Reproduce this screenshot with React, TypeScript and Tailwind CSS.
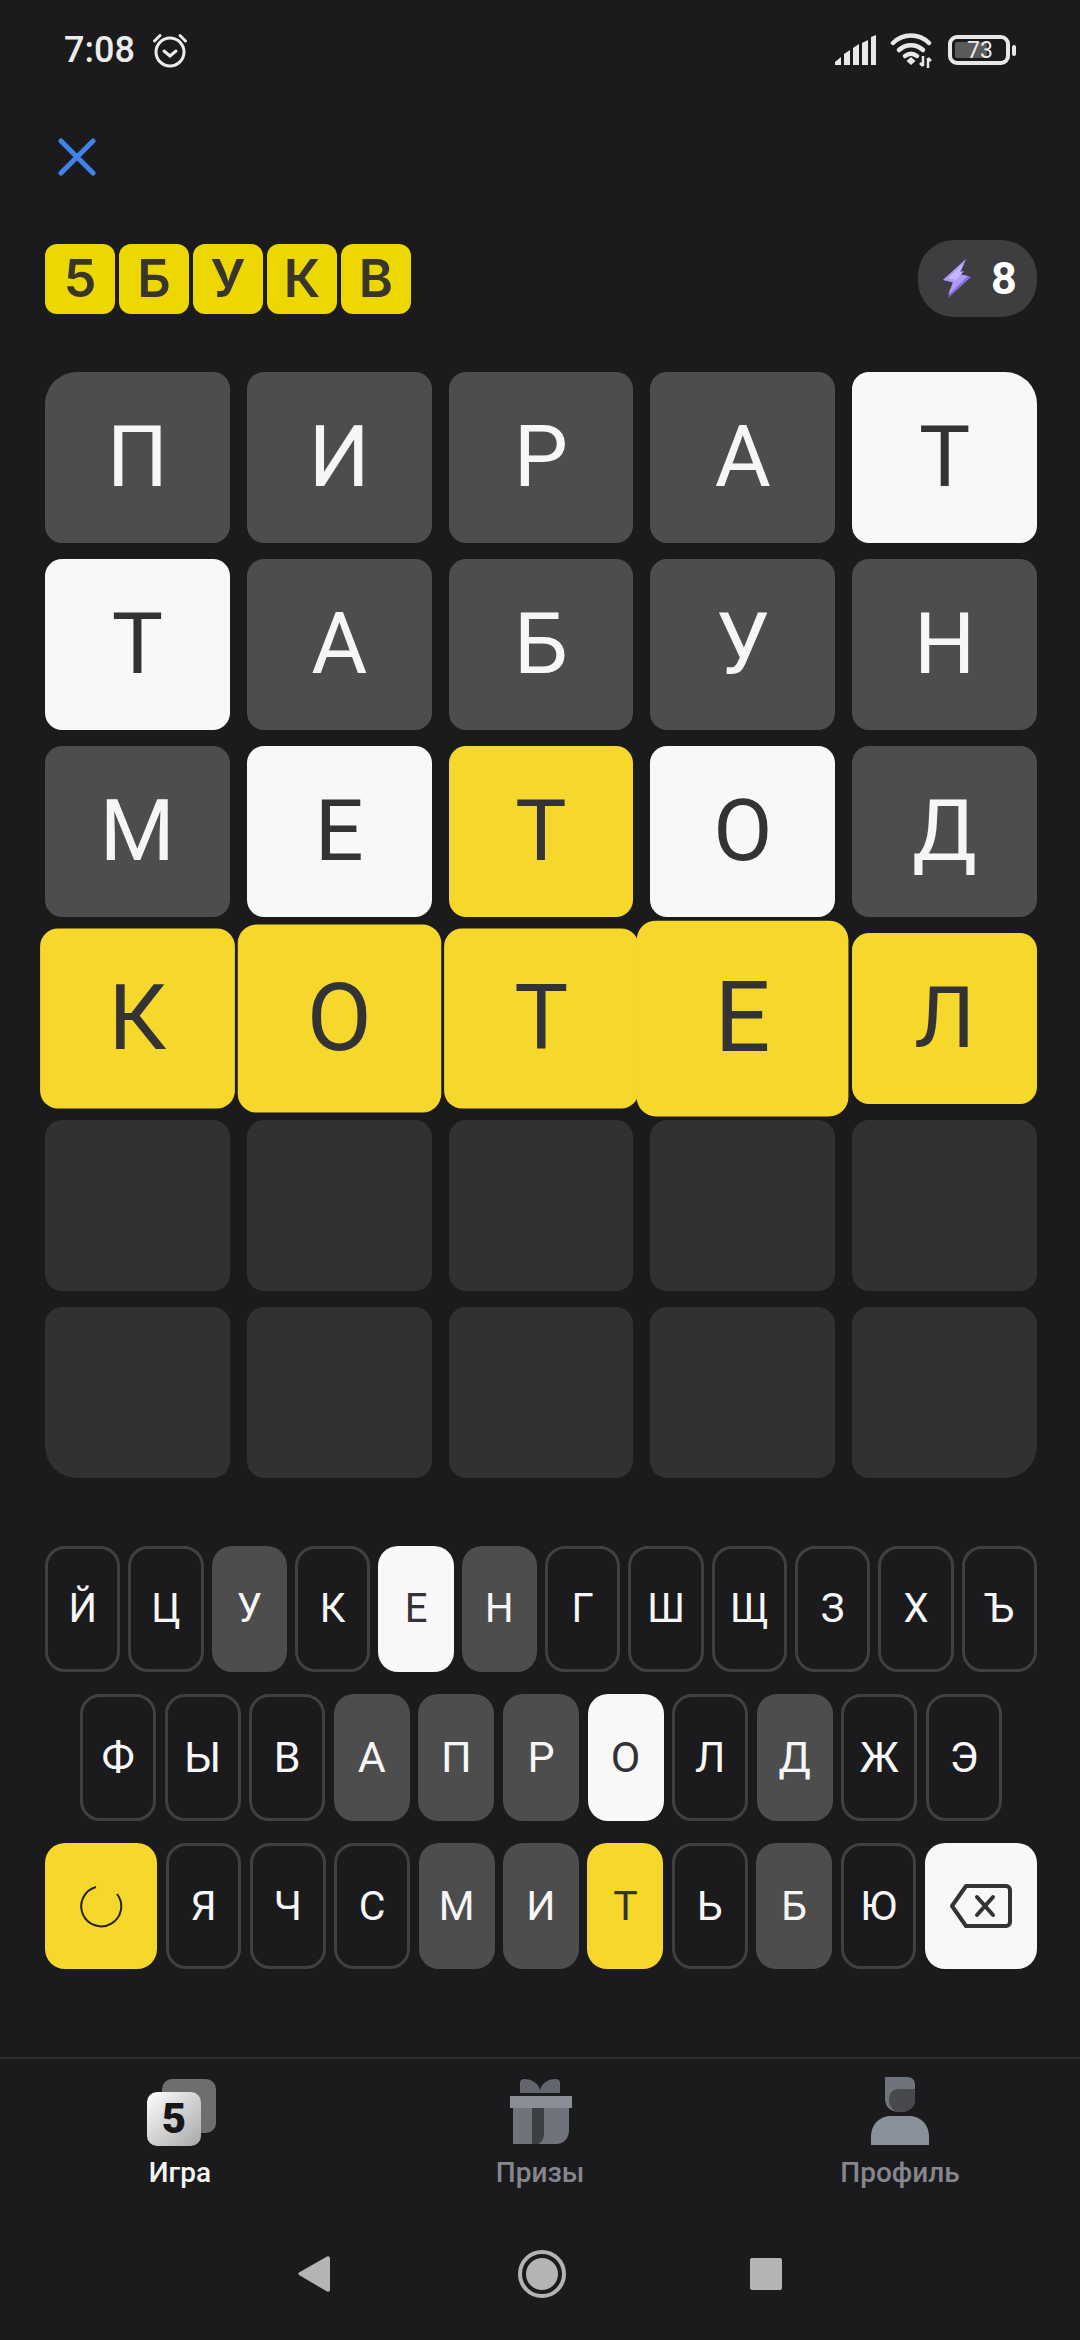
import React from 'react';

type Tone = 'gray' | 'white' | 'yellow' | 'empty' | 'plain';

const toneClass: Record<Tone, string> = {
  gray: 'bg-[#4d4d4d] text-[#f6f6f6]',
  white: 'bg-[#f8f8f8] text-[#333335]',
  yellow: 'bg-[#f6d72b] text-[#333335]',
  empty: 'bg-[#313133]',
  plain: 'border-[3px] border-[#404042] text-[#f6f6f6]',
};

type Cell = { l?: string; t: Tone; c?: string };

const board: Cell[] = [
  { l: 'П', t: 'gray', c: 'rounded-tl-[32px]' },
  { l: 'И', t: 'gray' },
  { l: 'Р', t: 'gray' },
  { l: 'А', t: 'gray' },
  { l: 'Т', t: 'white', c: 'rounded-tr-[32px]' },
  { l: 'Т', t: 'white' },
  { l: 'А', t: 'gray' },
  { l: 'Б', t: 'gray' },
  { l: 'У', t: 'gray' },
  { l: 'Н', t: 'gray' },
  { l: 'М', t: 'gray' },
  { l: 'Е', t: 'white' },
  { l: 'Т', t: 'yellow' },
  { l: 'О', t: 'white' },
  { l: 'Д', t: 'gray' },
  // current word, tiles are mid-animation
  { l: 'К', t: 'yellow', c: 'scale-[1.053]' },
  { l: 'О', t: 'yellow', c: 'scale-[1.1]' },
  { l: 'Т', t: 'yellow', c: 'scale-[1.053]' },
  { l: 'Е', t: 'yellow', c: 'scale-[1.145]' },
  { l: 'Л', t: 'yellow' },
  { t: 'empty' },
  { t: 'empty' },
  { t: 'empty' },
  { t: 'empty' },
  { t: 'empty' },
  { t: 'empty', c: 'rounded-bl-[32px]' },
  { t: 'empty' },
  { t: 'empty' },
  { t: 'empty' },
  { t: 'empty', c: 'rounded-br-[32px]' },
];

const row1: [string, Tone][] = [
  ['Й', 'plain'], ['Ц', 'plain'], ['У', 'gray'], ['К', 'plain'], ['Е', 'white'], ['Н', 'gray'],
  ['Г', 'plain'], ['Ш', 'plain'], ['Щ', 'plain'], ['З', 'plain'], ['Х', 'plain'], ['Ъ', 'plain'],
];
const row2: [string, Tone][] = [
  ['Ф', 'plain'], ['Ы', 'plain'], ['В', 'plain'], ['А', 'gray'], ['П', 'gray'], ['Р', 'gray'],
  ['О', 'white'], ['Л', 'plain'], ['Д', 'gray'], ['Ж', 'plain'], ['Э', 'plain'],
];
const row3: [string, Tone][] = [
  ['Я', 'plain'], ['Ч', 'plain'], ['С', 'plain'], ['М', 'gray'], ['И', 'gray'], ['Т', 'yellow'],
  ['Ь', 'plain'], ['Б', 'gray'], ['Ю', 'plain'],
];

function Key({ k }: { k: [string, Tone] }) {
  return (
    <div className={`rounded-[20px] flex items-center justify-center leading-none ${toneClass[k[1]]}`}>
      {k[0]}
    </div>
  );
}

function StatusBar() {
  return (
    <div className="h-[98px] flex items-center justify-between pl-[64px] pr-[64px] pt-[2px]">
      <div className="flex items-center gap-[17px]">
        <span className="text-[36px] font-medium leading-none text-[#ececec]">7:08</span>
        <svg width="36" height="36" viewBox="0 0 36 36" fill="none" stroke="#ececec" strokeWidth="3" strokeLinecap="round">
          <circle cx="18" cy="20" r="14" />
          <path d="M12 19l6 5 6-5" />
          <path d="M2.5 9L8 3.5M33.5 9L28 3.5" />
        </svg>
      </div>
      <div className="flex items-center">
        <svg width="42" height="30" viewBox="0 0 42 30" fill="#e8e8e8" className="mr-[14px]">
          <path d="M1 30v-3l6-5v8zM10 30V19l6-4v15zM19 30V13l6-4v21zM28 30V8l6-3v25z" />
          <path d="M37 30V2l5-2v30z" />
        </svg>
        <svg width="44" height="36" viewBox="0 0 44 36" fill="none" className="mr-[14px]">
          <g stroke="#e8e8e8" strokeWidth="4.5" strokeLinecap="round">
            <path d="M3 11c10-10 26-10 36 0" />
            <path d="M9 18c7-6.500 17-6.500 24 0" />
            <path d="M15 24c4-3 8-3 12 0" />
          </g>
          <path d="M16.500 29L21 25l4.500 4-4.500 4z" fill="#e8e8e8" />
          <path d="M33 24v10M33 34l-3-3M38 36V26M38 26l3 3" stroke="#e8e8e8" strokeWidth="2.500" />
        </svg>
        <div className="relative w-[62px] h-[30px] rounded-[9px] border-[4px] border-[#e8e8e8] flex items-center">
          <div className="ml-[3px] w-[32px] h-[16px] bg-[#5a5a5a] rounded-[2px]" />
          <span className="absolute left-[15px] text-[23px] leading-none text-[#ececec]">73</span>
        </div>
        <div className="ml-[2px] w-[4px] h-[11px] rounded-full bg-[#e8e8e8]" />
      </div>
    </div>
  );
}

function Header() {
  return (
    <div className="flex items-center justify-between pl-[45px] pr-[43px] h-[77px]">
      <div className="flex gap-[4px] font-['Inter',sans-serif]">
        {['5', 'Б', 'У', 'К', 'В'].map((c) => (
          <div key={c} className="w-[70px] h-[70px] rounded-[12px] bg-[#ecd800] text-[#38352a] flex items-center justify-center text-[52px] font-semibold leading-none">
            {c}
          </div>
        ))}
      </div>
      <div className="w-[119px] h-[77px] rounded-[36px] bg-[#3e3e40] flex items-center pl-[24px]">
        <svg width="31" height="40" viewBox="0 0 31 40">
          <path d="M24 0L1 21l11 3-6 15 23-21-11-3z" fill="#8a6ee0" />
          <path d="M24 0L1 21l10 2-5 13 20-19-10-2z" fill="#b09af8" />
          <path d="M22 4L6 19l8 2 8-9-4 1z" fill="#c6b4fc" />
        </svg>
        <span className="ml-[18px] text-[45px] font-bold leading-none text-white">8</span>
      </div>
    </div>
  );
}

function Board() {
  return (
    <div className="grid grid-cols-5 gap-x-[17px] gap-y-[16.5px] auto-rows-[170.5px] pl-[45px] pr-[43px] mt-[55px]">
      {board.map((cell, i) => (
        <div
          key={i}
          className={`rounded-[17px] flex items-center justify-center text-[86px] leading-none ${toneClass[cell.t]} ${cell.c ?? ''}`}
        >
          {cell.l}
        </div>
      ))}
    </div>
  );
}

function Keyboard() {
  return (
    <div className="flex flex-col gap-[22px] mt-[68.5px] pl-[45px] pr-[43px]">
      <div className="grid grid-cols-12 gap-[8px] h-[126px] text-[40px]">
        {row1.map((k) => <Key key={k[0]} k={k} />)}
      </div>
      <div className="grid grid-cols-11 gap-[8.5px] h-[127px] px-[35px] text-[43px]">
        {row2.map((k) => <Key key={k[0]} k={k} />)}
      </div>
      <div className="grid grid-cols-[112px_repeat(9,1fr)_112px] gap-[8.5px] h-[126px] text-[41px]">
        <div className="rounded-[20px] bg-[#f6d72b] flex items-center justify-center">
          <svg width="44" height="44" viewBox="0 0 44 44" fill="none" stroke="#222" strokeWidth="2">
            <path d="M17 3a20 20 0 1 0 21 7" />
          </svg>
        </div>
        {row3.map((k) => <Key key={k[0]} k={k} />)}
        <div className="rounded-[20px] bg-[#f8f8f8] flex items-center justify-center">
          <svg width="62" height="46" viewBox="0 0 62 46" fill="none" stroke="#333335" strokeWidth="4" strokeLinejoin="round" strokeLinecap="round">
            <path d="M16 3h40a4 4 0 0 1 4 4v32a4 4 0 0 1-4 4H16L2 23z" />
            <path d="M27 14l16 18M43 14L27 32" />
          </svg>
        </div>
      </div>
    </div>
  );
}

function BottomNav() {
  return (
    <div className="mt-[88px] border-t-2 border-[#2f2f31] grid grid-cols-3 pt-[18px]">
      <div className="flex flex-col items-center">
        <div className="relative ml-[3px] w-[69px] h-[70px]">
          <div className="absolute right-0 top-[2px] w-[54px] h-[54px] rounded-[10px] bg-[#6e6e6e]" />
          <div className="absolute left-0 bottom-[1px] w-[54px] h-[54px] rounded-[10px] bg-gradient-to-br from-white to-[#a8a8a8] flex items-center justify-center text-[#17171a] text-[42px] font-black leading-none">
            5
          </div>
        </div>
        <span className="mt-[8px] text-[28px] font-medium leading-[36px] text-[#f5f5f5]">Игра</span>
      </div>
      <div className="flex flex-col items-center">
        <svg width="66" height="70" viewBox="0 0 66 70">
          <path d="M13 6c0-3 2-4 4-4 8 0 14 4 16 11 2-7 8-11 15-11 3 0 5 1 5 4v10H13z" fill="#62656b" />
          <path d="M3 19h62v12H3z" fill="#8a8e97" />
          <path d="M6 31h56v22c0 8-5 14-13 14H6z" fill="#70737b" />
          <path d="M25 31h12v25c0 5-2 9-6 11h-6z" fill="#3d3e42" />
        </svg>
        <span className="mt-[8px] text-[28px] font-medium leading-[36px] text-[#85878d]">Призы</span>
      </div>
      <div className="flex flex-col items-center">
        <svg width="60" height="70" viewBox="0 0 60 70">
          <path d="M15 0h22c5 0 8 3 8 8v14c0 8-6 13-14 13h-2c-8 0-14-5-14-13z" fill="#6f747c" />
          <path d="M19 22c0-6 4-10 10-10h16v10c0 8-6 13-14 13h-1c-7 0-11-6-11-13z" fill="#47494d" />
          <path d="M1 68V60c0-14 10-21 20-21h18c10 0 20 7 20 21v8z" fill="#8a909a" />
        </svg>
        <span className="mt-[8px] text-[28px] font-medium leading-[36px] text-[#85878d]">Профиль</span>
      </div>
    </div>
  );
}

function SystemNav() {
  return (
    <div className="flex items-center justify-center mt-[59px]">
      <svg width="32" height="38" viewBox="0 0 32 38" className="mr-[188px]">
        <path d="M29 1.500a2 2 0 0 1 3 1.500v32a2 2 0 0 1-3 1.500L1 20a1.500 1.500 0 0 1 0-2.500z" fill="#b4b4b4" />
      </svg>
      <div className="w-[48px] h-[48px] rounded-full border-[4px] border-[#b4b4b4] flex items-center justify-center mr-[184px]">
        <div className="w-[32px] h-[32px] rounded-full bg-[#b4b4b4]" />
      </div>
      <div className="w-[32px] h-[32px] rounded-[2px] bg-[#b4b4b4]" />
    </div>
  );
}

export default function App() {
  return (
    <div className="w-[1080px] h-[2340px] overflow-hidden bg-[#1b1b1d] font-['Roboto',sans-serif]">
      <StatusBar />
      <div className="h-[142px] pl-[58px] pt-[40px]">
        <svg width="38" height="38" viewBox="0 0 38 38" fill="none" stroke="#3f83e8" strokeWidth="5" strokeLinecap="round">
          <path d="M3 3l32 32M35 3L3 35" />
        </svg>
      </div>
      <Header />
      <Board />
      <Keyboard />
      <BottomNav />
      <SystemNav />
    </div>
  );
}
